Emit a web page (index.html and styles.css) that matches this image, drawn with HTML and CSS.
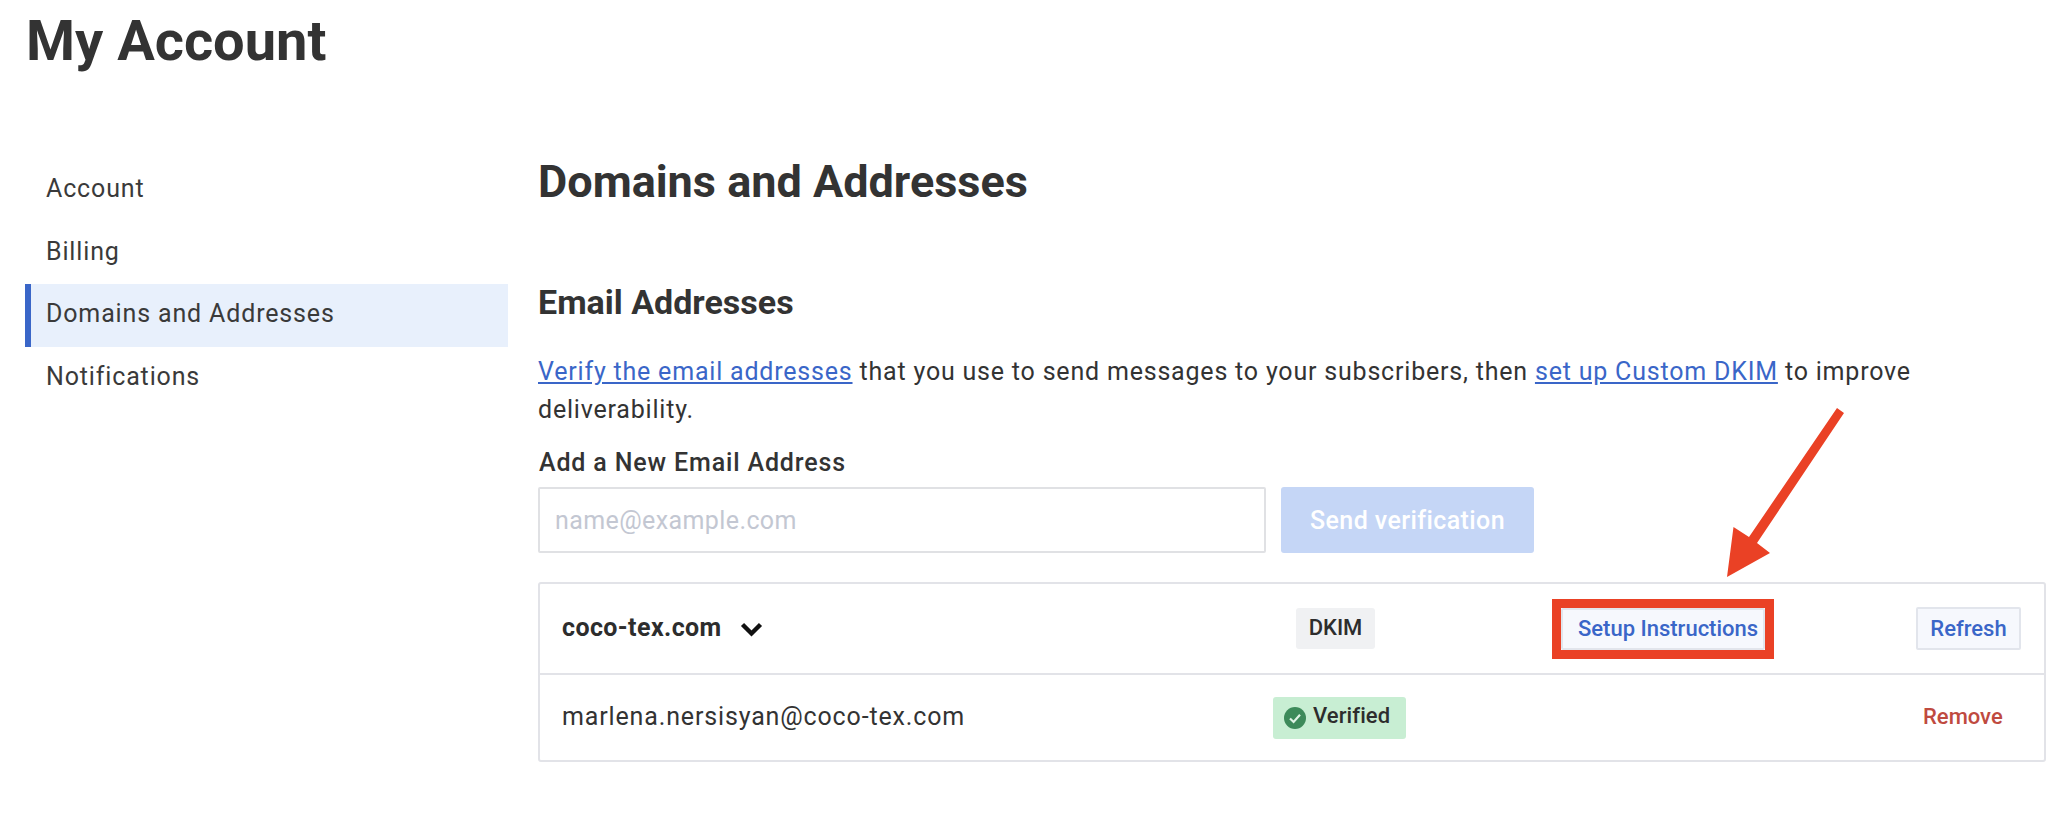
FILE: index.html
```html
<!DOCTYPE html>
<html lang="en">
<head>
<meta charset="utf-8">
<title>My Account</title>
<link rel="stylesheet" href="styles.css">
</head>
<body>
<header class="page-head"><h1>My Account</h1></header>
<div class="layout">
  <nav class="side">
    <a class="side-item">Account</a>
    <a class="side-item">Billing</a>
    <a class="side-item active">Domains and Addresses</a>
    <a class="side-item">Notifications</a>
  </nav>
  <main class="main">
    <h2>Domains and Addresses</h2>
    <h3>Email Addresses</h3>
    <p class="intro"><a href="#">Verify the email addresses</a> that you use to send messages to your subscribers, then <a href="#">set up Custom DKIM</a> to improve deliverability.</p>
    <label class="field-label" for="email">Add a New Email Address</label>
    <div class="add-row">
      <input id="email" class="email-input" placeholder="name@example.com">
      <button class="send-btn">Send verification</button>
    </div>
    <div class="table">
      <div class="row row-domain">
        <div class="cell-name">
          <strong>coco-tex.com</strong>
          <svg class="chevron" viewBox="0 0 23 15" width="23" height="15"><path d="M2.5 2.5 L11.5 11.5 L20.5 2.5" fill="none" stroke="#111" stroke-width="4.4"/></svg>
        </div>
        <div class="cell-status"><span class="badge-dkim">DKIM</span></div>
        <div class="cell-setup"><span class="highlight"><button class="btn-light setup">Setup Instructions</button></span></div>
        <div class="cell-action"><button class="btn-light refresh">Refresh</button></div>
      </div>
      <div class="row row-address">
        <div class="cell-name">marlena.nersisyan@coco-tex.com</div>
        <div class="cell-status"><span class="badge-verified">
          <svg viewBox="0 0 22 22" width="22" height="22"><circle cx="11" cy="11" r="11" fill="#3d8a5a"/><path d="M6 11.5 L9.6 15 L16 7.8" fill="none" stroke="#dff3e5" stroke-width="2.2"/></svg>
          <span class="verified-text">Verified</span></span></div>
        <div class="cell-setup"></div>
        <div class="cell-action"><a class="remove">Remove</a></div>
      </div>
    </div>
  </main>
</div>
<svg class="arrow" viewBox="0 0 140 180" width="140" height="180"><path d="M115 5 L122 10 L35 140 L48 150 L5 174 L11.5 124 L27 134 Z" fill="#ea4125"/></svg>
</body>
</html>
```
FILE: styles.css
```css
* { box-sizing: border-box; }
html, body { margin: 0; height: 814px; overflow: hidden; background: #fff; }
body { position: relative; font-family: Roboto, "Liberation Sans", sans-serif; color: #333; }
.page-head { height: 150px; padding: 9px 0 0 26px; }
h1 { margin: 0; font-size: 56px; line-height: 64px; font-weight: 700; color: #333; }
.layout { display: flex; align-items: flex-start; }
.side { width: 483px; margin: 9px 0 0 25px; display: flex; flex-direction: column; }
.side-item { height: 62.5px; line-height: 60px; padding-left: 21px; font-size: 25px; letter-spacing: 0.85px; color: #3a3a3a; }
.side-item.active { background: #e8f0fc; border-left: 6px solid #3a66c8; padding-left: 15px; }
.main { margin-left: 30px; width: 1508px; }
h2 { margin: 0; font-size: 45px; line-height: 64px; font-weight: 700; color: #333; }
h3 { margin: 68px 0 0; font-size: 34px; line-height: 40px; font-weight: 700; color: #333; }
.intro { margin: 31px 0 0; font-size: 25px; line-height: 38px; letter-spacing: 0.8px; color: #333; }
.intro a { color: #3a66c8; text-decoration: underline; }
.field-label { display: block; margin: 19px 0 0 1px; font-size: 25px; line-height: 30px; font-weight: 500; letter-spacing: 0.85px; color: #333; }
.add-row { display: flex; margin-top: 9px; gap: 15px; }
.email-input { width: 728px; height: 66px; padding: 0 15px; border: 2px solid #e0e1e4; border-radius: 2px; font: 400 25px Roboto, sans-serif; letter-spacing: 0.4px; outline: none; }
.email-input::placeholder { color: #c3c7d2; opacity: 1; }
.send-btn { width: 253px; height: 66px; border: 0; border-radius: 3px; background: #c5d6f6; color: #fff; font: 500 25px Roboto, sans-serif; letter-spacing: 0.4px; }
.table { margin-top: 29px; border: 2px solid #e2e3e8; border-radius: 3px; }
.row { display: flex; align-items: center; padding-left: 22px; }
.row-domain { height: 91px; border-bottom: 2px solid #e2e3e8; }
.row-address { height: 85px; }
.cell-name { width: 711px; padding-bottom: 2px; display: flex; align-items: center; gap: 18px; font-size: 25px; letter-spacing: 0.85px; }
.cell-name strong { font-weight: 700; font-size: 25px; letter-spacing: 0.4px; color: #2d2d2d; }
.chevron { display: block; margin-top: 3px; }
.cell-status { width: 279px; }
.row-domain .cell-status { padding-left: 23px; }
.badge-dkim { display: inline-flex; align-items: center; justify-content: center; width: 79px; height: 41px; padding-bottom: 2px; background: #f0f1f3; border-radius: 3px; font-size: 22px; font-weight: 500; color: #2d2d2d; }
.badge-verified { display: inline-flex; align-items: center; gap: 7px; width: 133px; height: 42px; padding-left: 11px; background: #c8eed3; border-radius: 3px; font-size: 22px; font-weight: 500; color: #2d2d2d; }
.verified-text { padding-bottom: 4px; letter-spacing: 0.1px; }
.cell-setup { width: 364px; }
.highlight { display: inline-block; border: 9px solid #ea4125; }
.btn-light { display: block; height: 42px; border: 2px solid #e2e5ec; border-radius: 2px; background: #f6f8fd; color: #3a66c8; font: 500 22px Roboto, sans-serif; padding: 0; }
.setup { width: 204px; height: 42px; text-align: left; padding-left: 15px; white-space: nowrap; }
.cell-action { width: 128px; display: flex; justify-content: flex-start; }
.refresh { width: 105px; height: 43px; }
.remove { margin-left: 7px; padding-bottom: 2px; color: #bf4a40; font-size: 22px; font-weight: 500; }
.arrow { position: absolute; left: 1722px; top: 403px; }
```
